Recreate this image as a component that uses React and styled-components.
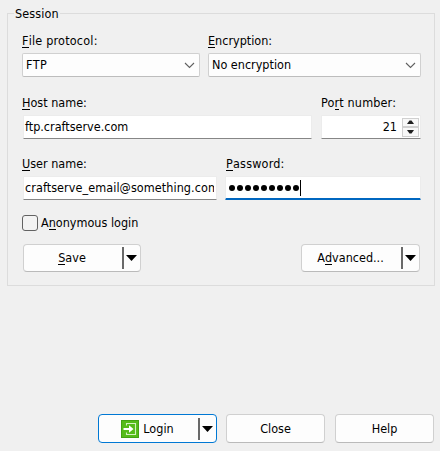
import React from "react";
import styled, { createGlobalStyle } from "styled-components";

const GlobalStyle = createGlobalStyle`
  * { box-sizing: border-box; }
  body { margin: 0; background: #f0f0f0; }
  button, input { font: inherit; color: inherit; }
`;

const Dialog = styled.main`
  width: 440px;
  height: 451px;
  padding: 13px 5px 0 7px;
  overflow: hidden;
  background: #f0f0f0;
  color: #000;
  font: 12.5px/16px "DejaVu Sans Condensed", "DejaVu Sans", sans-serif;
  font-stretch: condensed;
`;

const Group = styled.section`
  height: 273px;
  padding: 0 13px 0 14px;
  border: 1px solid #dcdcdc;
`;

const Legend = styled.h1`
  width: max-content;
  height: 16px;
  margin: -8px 0 0 -8px;
  padding: 0 1px;
  background: #f0f0f0;
  font: inherit;
`;

const Text = styled.span`
  display: block;
  white-space: pre;
  letter-spacing: ${(p) => p.$track || 0}px;
  margin-left: ${(p) => p.$indent || 0}px;
`;

const Key = styled.span`
  box-shadow: 0 1px 0 #000;
  display: inline-block;
  height: 14px;
`;

const Fields = styled.div`
  display: grid;
  grid-template-columns: ${(p) => p.$columns};
  column-gap: ${(p) => p.$gap}px;
  margin-top: ${(p) => p.$top}px;
`;

const Field = styled.label`
  display: flex;
  flex-direction: column;
  gap: 4px;
`;

const Select = styled.div`
  display: flex;
  align-items: center;
  justify-content: space-between;
  height: 24px;
  padding: 0 4px 0 3px;
  border: 1px solid #d0d0d0;
  border-bottom-color: #bdbdbd;
  border-radius: 2px;
  background: #fdfdfd;
`;

const Input = styled.div`
  display: flex;
  align-items: center;
  height: 24px;
  margin-left: ${(p) => (p.$focused ? 0 : 1)}px;
  padding: 0 1px 0 ${(p) => (p.$focused ? 3 : 1)}px;
  justify-content: ${(p) => (p.$end ? "flex-end" : "flex-start")};
  gap: 5px;
  overflow: hidden;
  border: 1px solid #ececec;
  border-bottom: ${(p) => (p.$focused ? "2px solid #0067c0" : "1px solid #868686")};
  border-radius: 1px;
  background: #fff;
`;

const Clip = styled.div`
  overflow: hidden;
  width: 189px;
`;

const Dots = styled.div`
  display: flex;
  gap: 2px;
`;

const Dot = styled.i`
  width: 6px;
  height: 6px;
  border-radius: 50%;
  background: #000;
`;

const Caret = styled.i`
  width: 1px;
  height: 16px;
  margin-left: -4px;
  background: #000;
`;

const Spinner = styled.div`
  display: flex;
  flex-direction: column;
  width: 17px;
  height: 19px;
`;

const Step = styled.div`
  display: flex;
  flex: 1;
  align-items: center;
  justify-content: center;
  border: 1px solid #d0d0d0;
  background: #f8f8f8;
`;

const CheckRow = styled.label`
  display: flex;
  align-items: center;
  gap: 3px;
  height: 16px;
  margin-top: 15px;
`;

const Box = styled.span`
  width: 16px;
  height: 16px;
  border: 1px solid #626262;
  border-radius: 3px;
  background: #f3f3f3;
`;

const GroupActions = styled.div`
  display: flex;
  justify-content: space-between;
  margin: 13px 1px 0;
`;

const Footer = styled.footer`
  display: grid;
  grid-template-columns: 128px 109px 99px;
  margin: 128px 1px 0 91px;
`;

const Button = styled.button`
  display: flex;
  align-items: center;
  width: ${(p) => p.$width}px;
  height: ${(p) => p.$height || 29}px;
  padding: 0;
  border: 1px solid ${(p) => (p.$primary ? "#0078d4" : "#d0d0d0")};
  border-bottom-color: ${(p) => (p.$primary ? "#0078d4" : "#bababa")};
  border-radius: 4px;
  background: #fdfdfd;
`;

const Face = styled.span`
  display: flex;
  flex: 1;
  align-items: center;
  justify-content: center;
  gap: 4px;
  padding-right: ${(p) => p.$shift || 0}px;
`;

const Split = styled.span`
  display: flex;
  align-items: center;
  width: 18px;
  height: 22px;
  padding-left: 2px;
  border-left: 2px solid #696969;
`;

function Chevron() {
  return (
    <svg width="11" height="7" viewBox="0 0 11 7">
      <path d="M1 1 5.5 5.5 10 1" fill="none" stroke="#606060" strokeWidth="1.1" />
    </svg>
  );
}

function Arrow() {
  return (
    <svg width="11" height="6" viewBox="0 0 11 6">
      <path d="M0 0H11L5.5 6Z" />
    </svg>
  );
}

function StepArrow({ up }) {
  return (
    <svg width="7" height="4" viewBox="0 0 7 4">
      <path d={up ? "M0 4H7L4.5 .5h-2Z" : "M0 0H7L4.5 3.5h-2Z"} fill="#202020" />
    </svg>
  );
}

function LoginIcon() {
  return (
    <svg width="18" height="18" viewBox="0 0 18 18">
      <rect width="18" height="18" fill="#43a212" />
      <rect x="1" y="1" width="16" height="16" fill="#55bb18" />
      <path d="M5.5 5.5v-2h9v11h-9v-2" fill="none" stroke="#d3f2c0" strokeWidth="1.1" />
      <path d="M2.5 8H8V5.3l4.5 3.7L8 12.7V10H2.5Z" fill="#fff" />
    </svg>
  );
}

function SplitButton({ children, ...props }) {
  return (
    <Button {...props}>
      <Face $shift={2}>{children}</Face>
      <Split><Arrow /></Split>
    </Button>
  );
}

export default function App() {
  return (
    <>
      <GlobalStyle />
      <Dialog>
        <Group>
          <Legend><Text $track={0.1}>Session</Text></Legend>
          <Fields $columns="178px 213px" $gap={8} $top={11}>
            <Field>
              <Text $track={0.2}><Key>F</Key>ile protocol:</Text>
              <Select><Text $track={0.4}>FTP</Text><Chevron /></Select>
            </Field>
            <Field>
              <Text><Key>E</Key>ncryption:</Text>
              <Select><Text>No encryption</Text><Chevron /></Select>
            </Field>
          </Fields>
          <Fields $columns="290px 101px" $gap={8} $top={18}>
            <Field>
              <Text><Key>H</Key>ost name:</Text>
              <Input><Text>ftp.craftserve.com</Text></Input>
            </Field>
            <Field>
              <Text $indent={1} $track={0.15}>Po<Key>r</Key>t number:</Text>
              <Input $end>
                <Text>21</Text>
                <Spinner>
                  <Step><StepArrow up /></Step>
                  <Step><StepArrow /></Step>
                </Spinner>
              </Input>
            </Field>
          </Fields>
          <Fields $columns="195px 196px" $gap={8} $top={17}>
            <Field>
              <Text><Key>U</Key>ser name:</Text>
              <Input><Clip><Text $track={0.07}>craftserve_email@something.com</Text></Clip></Input>
            </Field>
            <Field>
              <Text $indent={1} $track={0.2}><Key>P</Key>assword:</Text>
              <Input $focused>
                <Dots>{Array.from({ length: 9 }, (_, i) => <Dot key={i} />)}</Dots>
                <Caret />
              </Input>
            </Field>
          </Fields>
          <CheckRow><Box /><Text>A<Key>n</Key>onymous login</Text></CheckRow>
          <GroupActions>
            <SplitButton $width={118} $height={28}><Text><Key>S</Key>ave</Text></SplitButton>
            <SplitButton $width={119} $height={28}><Text>A<Key>d</Key>vanced...</Text></SplitButton>
          </GroupActions>
        </Group>
        <Footer>
          <SplitButton $width={119} $primary><LoginIcon /><Text>Login</Text></SplitButton>
          <Button $width={99}><Face><Text>Close</Text></Face></Button>
          <Button $width={99}><Face><Text>Help</Text></Face></Button>
        </Footer>
      </Dialog>
    </>
  );
}
